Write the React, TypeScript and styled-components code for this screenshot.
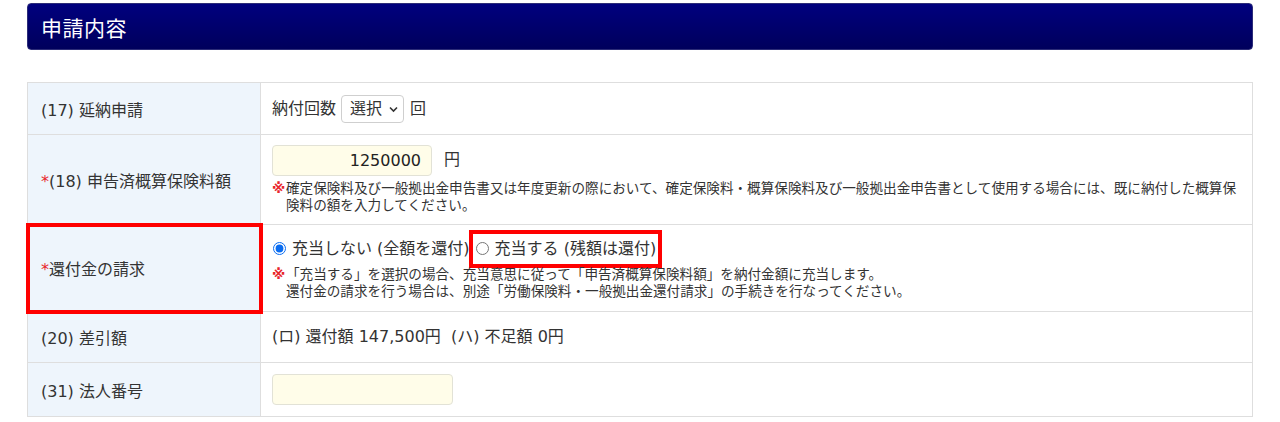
import React from 'react';
import styled, { createGlobalStyle } from 'styled-components';

const GlobalStyle = createGlobalStyle`
  body {
    margin: 0;
    background: #fff;
    color: #333;
    font-family: "DejaVu Sans", "Noto Sans CJK JP", sans-serif;
  }
`;

const Page = styled.div`
  padding: 3px 27px 6px;
`;

const SectionHeader = styled.h2`
  display: flex;
  align-items: center;
  height: 47px;
  margin: 0 0 32px;
  padding: 0 13px;
  box-sizing: border-box;
  border-radius: 4px;
  border: 1px solid #2c2c78;
  background: linear-gradient(#00007e, #00005c);
  color: #fff;
  font-size: 21px;
  font-weight: normal;
  letter-spacing: 0.5px;
`;

const FormTable = styled.table`
  width: 100%;
  border-collapse: collapse;
  table-layout: fixed;
`;

const Row = styled.tr<{ $height: number }>`
  height: ${(p) => p.$height}px;
`;

const LabelCell = styled.th<{ $highlight?: boolean }>`
  width: 233px;
  box-sizing: border-box;
  padding: 0 13px;
  background: #eef5fc;
  border: 1px solid #dedede;
  text-align: left;
  vertical-align: middle;
  font-size: 16px;
  font-weight: normal;
  color: #333;
  ${(p) => p.$highlight && `outline: 4px solid #f00; outline-offset: -2px;`}
`;

const ValueCell = styled.td`
  padding: 8px 11px;
  border: 1px solid #dedede;
  vertical-align: middle;
  font-size: 16px;
  line-height: 26px;
`;

const Required = styled.span`
  color: #e8262c;
`;

const Inline = styled.div`
  display: flex;
  align-items: center;
`;

const SelectWrap = styled.span`
  position: relative;
  display: inline-flex;
  margin: 0 6px 0 5px;
`;

const Select = styled.select`
  appearance: none;
  width: 63px;
  height: 28px;
  padding: 0 20px 0 8px;
  border: 1px solid #cfcfcf;
  border-radius: 4px;
  background: #fff;
  color: #333;
  font-family: inherit;
  font-size: 16px;
`;

const Chevron = styled.svg`
  position: absolute;
  right: 6px;
  top: 10px;
  pointer-events: none;
`;

const TextInput = styled.input<{ $width: number }>`
  width: ${(p) => p.$width}px;
  height: 31px;
  box-sizing: border-box;
  padding: 0 10px;
  border: 1px solid #e2e2d6;
  border-radius: 4px;
  background: #fffde9;
  color: #222;
  font-family: inherit;
  font-size: 16px;
  text-align: right;
`;

const Unit = styled.span`
  margin-left: 12px;
`;

const Note = styled.div`
  display: flex;
  margin-top: 4px;
  font-size: 13.6px;
  line-height: 17.5px;
  color: #333;
`;

const NoteMark = styled.span`
  flex: 0 0 14px;
  color: #e8262c;
  font-weight: bold;
`;

const RadioGroup = styled.div`
  display: flex;
  align-items: center;
  gap: 5px;
`;

const RadioLabel = styled.label<{ $highlight?: boolean }>`
  display: inline-flex;
  align-items: center;
  height: 26px;
  gap: 6px;
  font-size: 16px;
  ${(p) => p.$highlight && `outline: 4px solid #f00; outline-offset: 2px;`}

  & input {
    margin: 0 0 0 1px;
    width: 13px;
    height: 13px;
    accent-color: #0a6cf0;
  }
`;

const App: React.FC = () => {
  return (
    <Page>
      <GlobalStyle />
      <SectionHeader>申請内容</SectionHeader>

      <FormTable>
        <tbody>
          <Row $height={52}>
            <LabelCell>(17) 延納申請</LabelCell>
            <ValueCell>
              <Inline>
                納付回数
                <SelectWrap>
                  <Select defaultValue="">
                    <option value="">選択</option>
                    <option value="1">1</option>
                    <option value="2">2</option>
                    <option value="3">3</option>
                  </Select>
                  <Chevron width="9" height="8" viewBox="0 0 9 8">
                    <path d="M1 2.5 L4.5 6 L8 2.5" fill="none" stroke="#333" strokeWidth="1.6" />
                  </Chevron>
                </SelectWrap>
                回
              </Inline>
            </ValueCell>
          </Row>

          <Row $height={90}>
            <LabelCell>
              <Required>*</Required>(18) 申告済概算保険料額
            </LabelCell>
            <ValueCell>
              <Inline>
                <TextInput $width={160} defaultValue="1250000" />
                <Unit>円</Unit>
              </Inline>
              <Note>
                <NoteMark>※</NoteMark>
                <span>
                  確定保険料及び一般拠出金申告書又は年度更新の際において、確定保険料・概算保険料及び一般拠出金申告書として使用する場合には、既に納付した概算保険料の額を入力してください。
                </span>
              </Note>
            </ValueCell>
          </Row>

          <Row $height={87}>
            <LabelCell $highlight>
              <Required>*</Required>還付金の請求
            </LabelCell>
            <ValueCell>
              <RadioGroup>
                <RadioLabel>
                  <input type="radio" name="refund" defaultChecked />
                  充当しない (全額を還付)
                </RadioLabel>
                <RadioLabel $highlight>
                  <input type="radio" name="refund" />
                  充当する (残額は還付)
                </RadioLabel>
              </RadioGroup>
              <Note>
                <NoteMark>※</NoteMark>
                <span>
                  「充当する」を選択の場合、充当意思に従って「申告済概算保険料額」を納付金額に充当します。
                  <br />
                  還付金の請求を行う場合は、別途「労働保険料・一般拠出金還付請求」の手続きを行なってください。
                </span>
              </Note>
            </ValueCell>
          </Row>

          <Row $height={51}>
            <LabelCell>(20) 差引額</LabelCell>
            <ValueCell>(ロ) 還付額 147,500円&nbsp; (ハ) 不足額 0円</ValueCell>
          </Row>

          <Row $height={54}>
            <LabelCell>(31) 法人番号</LabelCell>
            <ValueCell>
              <Inline>
                <TextInput $width={181} defaultValue="" />
              </Inline>
            </ValueCell>
          </Row>
        </tbody>
      </FormTable>
    </Page>
  );
};

export default App;
